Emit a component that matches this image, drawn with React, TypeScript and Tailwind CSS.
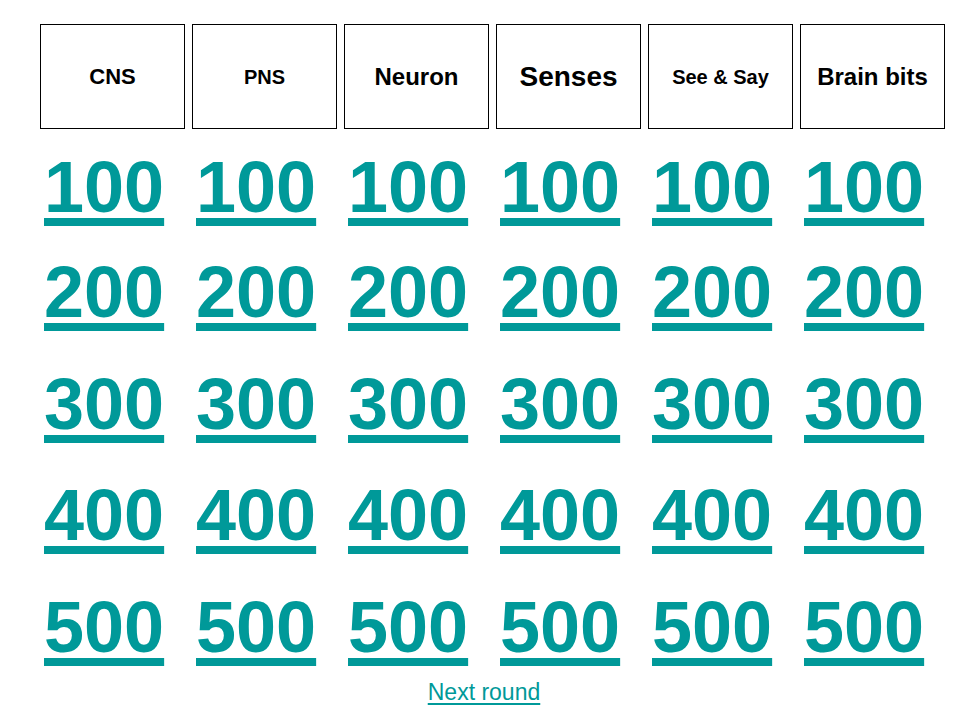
const categories = [
  { title: "CNS", size: "text-[22px]" },
  { title: "PNS", size: "text-[20px]" },
  { title: "Neuron", size: "text-[24px]" },
  { title: "Senses", size: "text-[28px]" },
  { title: "See & Say", size: "text-[20px]" },
  { title: "Brain bits", size: "text-[24px]" },
];

const points = [100, 200, 300, 400, 500];

export default function App() {
  return (
    <main className="w-[960px] h-[720px] bg-white pt-[24px] pl-[40px] font-['Liberation_Sans',Arial,sans-serif] overflow-hidden">
      <div className="grid grid-cols-[repeat(6,145px)] gap-x-[7px]">
        {categories.map((c) => (
          <div
            key={c.title}
            className="h-[105px] border border-black flex items-center justify-center"
          >
            <span className={`${c.size} font-bold text-black leading-none`}>{c.title}</span>
          </div>
        ))}
      </div>

      <div className="mt-[22px] grid grid-cols-[repeat(6,145px)] grid-rows-[105px_112px_111px_112px_72px] gap-x-[7px]">
        {points.map((p) =>
          categories.map((c) => (
            <a
              key={`${c.title}-${p}`}
              href="#"
              className="ml-[4px] text-[72px] leading-none font-bold text-[#009999] underline decoration-[8px] underline-offset-[6px] self-start"
            >
              {p}
            </a>
          ))
        )}
      </div>

      <div className="mt-[18px] -ml-[40px] pl-[8px] flex justify-center">
        <a
          href="#"
          className="text-[23px] leading-none text-[#009999] underline decoration-[2px] underline-offset-[3px]"
        >
          Next round
        </a>
      </div>
    </main>
  );
}
